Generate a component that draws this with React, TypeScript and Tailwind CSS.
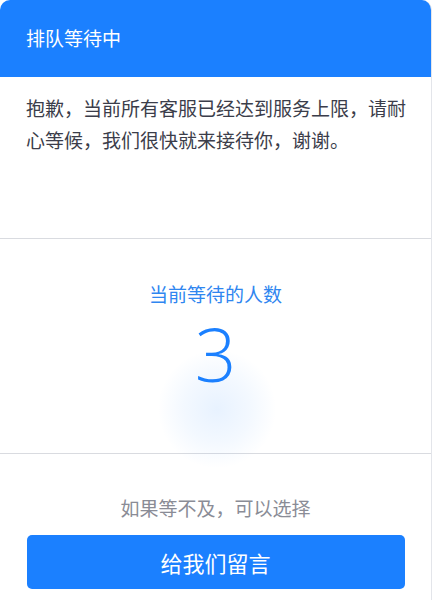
import React from "react";

export default function App() {
  const font = { fontFamily: '"Noto Sans CJK SC", "Noto Sans", sans-serif' };
  return (
    <div className="w-[433px] h-[600px] bg-white overflow-hidden" style={font}>
      <div className="w-[432px] h-[600px] border-r border-[#e3e5ea] rounded-t-[10px] overflow-hidden flex flex-col">
        <div className="h-[77px] shrink-0 bg-[#1b80ff] px-[26px] flex items-center text-white text-[19px]">
          排队等待中
        </div>
        <div className="h-[162px] shrink-0 pl-[26px] pr-[18px] pt-[15px] text-[19px] leading-[32px] text-[#3b3d4a] border-b border-[#d9dbe0]">
          抱歉，当前所有客服已经达到服务上限，请耐心等候，我们很快就来接待你，谢谢。
        </div>
        <div className="relative h-[215px] shrink-0 flex flex-col items-center border-b border-[#d9dbe0] overflow-visible">
          <div className="absolute left-[157px] top-[110px] w-[120px] h-[120px] rounded-full bg-[radial-gradient(circle,rgba(27,128,255,0.10)_0%,rgba(27,128,255,0.05)_40%,rgba(27,128,255,0)_70%)]" />
          <div className="relative mt-[40px] text-[19px] leading-[30px] text-[#2f86f0]">当前等待的人数</div>
          <div className="relative mt-[8px] text-[73px] leading-[73px] text-[#1b80ff]" style={{ fontFamily: '"Open Sans", "Noto Sans", sans-serif', fontWeight: 300 }}>
            3
          </div>
        </div>
        <div className="flex flex-col items-center">
          <div className="mt-[40px] text-[19px] leading-[28px] text-[#8a8c96]">如果等不及，可以选择</div>
          <button className="mt-[13px] w-[378px] h-[54px] rounded-[5px] bg-[#1b80ff] text-white text-[22px] flex items-center justify-center">
            给我们留言
          </button>
        </div>
      </div>
    </div>
  );
}
